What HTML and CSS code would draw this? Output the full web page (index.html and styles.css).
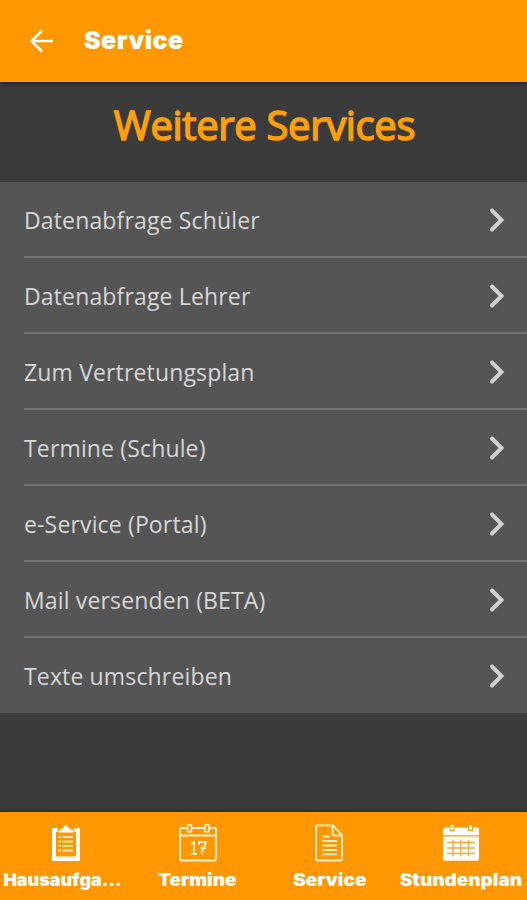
FILE: index.html
```html
<!DOCTYPE html>
<html lang="de">
<head>
<meta charset="utf-8">
<title>Service</title>
<link rel="stylesheet" href="styles.css">
</head>
<body>
<svg class="defs" width="0" height="0"><symbol id="chevron" viewBox="0 0 18 26"><path d="M4 3.500 13.500 13 4 22.500" fill="none" stroke="#d0d0d0" stroke-width="4" stroke-linecap="round"/></symbol></svg>
<header class="bar">
  <svg class="back" viewBox="0 0 26 26"><path d="M24 13H3M13 2.500 2.500 13 13 23.500" fill="none" stroke="#fff" stroke-width="2.500"/></svg>
  <span class="bar-title">Service</span>
</header>
<main>
  <h1>Weitere Services</h1>
  <ul class="list">
    <li><span>Datenabfrage Schüler</span><svg class="chev"><use href="#chevron"/></svg></li>
    <li><span>Datenabfrage Lehrer</span><svg class="chev"><use href="#chevron"/></svg></li>
    <li><span>Zum Vertretungsplan</span><svg class="chev"><use href="#chevron"/></svg></li>
    <li><span>Termine (Schule)</span><svg class="chev"><use href="#chevron"/></svg></li>
    <li><span>e-Service (Portal)</span><svg class="chev"><use href="#chevron"/></svg></li>
    <li><span>Mail versenden (BETA)</span><svg class="chev"><use href="#chevron"/></svg></li>
    <li><span>Texte umschreiben</span><svg class="chev"><use href="#chevron"/></svg></li>
  </ul>
</main>
<nav class="tabs">
  <a class="tab">
    <svg viewBox="0 0 38 38"><path fill="#fff" fill-rule="evenodd" d="M5 4h5.500v4H9v24.500h20V8h-1.500V4H33v33H5z"/><path fill="#fff" d="M11.500 8.500V6.500l5-2.500Q17.500 1 19 1t2.500 3l5 2.500v2z"/><path d="M11.500 13h2.500M11.500 17.500h2.500M11.500 22h2.500M11.500 26.500h2.500M15.500 13H26M15.500 17.500H26M15.500 22H26M15.500 26.500H26" stroke="#ffe6b8" stroke-width="2.200"/></svg>
    <span class="label narrow">Hausaufga...</span>
  </a>
  <a class="tab">
    <svg viewBox="0 0 38 38" fill="none" stroke="#fff0cf" stroke-width="1.800"><path d="M8 4H2.500Q1 4 1 5.500v29Q1 36.500 3 36.500h32q2 0 2-2v-29Q37 4 35.500 4H31M26 4H13M1 11.500h36"/><rect x="8.500" y="1" width="4" height="7" rx="1.500"/><rect x="26" y="1" width="4" height="7" rx="1.500"/><path d="m12 20 3-2v12m-3 0h6M20 21v-3h7q0 2-2.500 5l-2 7M21.500 24H27"/></svg>
    <span class="label">Termine</span>
  </a>
  <a class="tab">
    <svg viewBox="0 0 38 38" fill="none" stroke="#fff0cf" stroke-width="1.800"><path d="M6 2.500Q6 1.300 7.500 1.300H23L32 11v24q0 1.500-1.500 1.500h-23Q6 36.500 6 35zM22.500 1.500V9q0 2.500 2.500 2.500h7M12.500 12.500h7M12.500 17h14.500M12.500 21.500h14.500M12.500 26h14.500M12.500 30.300h14.500"/></svg>
    <span class="label">Service</span>
  </a>
  <a class="tab">
    <svg viewBox="0 0 38 38"><path fill="#fff" d="M1 5q0-1.500 1.500-1.500H7.500V7h5V3.500h13.500V7h5V3.500h4.500Q37 3.500 37 5v6.300H1zM1 12.500h36V35q0 1.800-1.800 1.800H2.800Q1 36.800 1 35z"/><path d="M10 1v5M28.500 1v5" stroke="#fff" stroke-width="3"/><path d="M5 18.500h28M5 24h28M5 29.500h28M11 15.500v17M18.800 15.500v17M26.500 15.500v17" stroke="#e9ad43" stroke-width="1.400"/></svg>
    <span class="label">Stundenplan</span>
  </a>
</nav>
</body>
</html>
```
FILE: styles.css
```css
* { box-sizing: border-box; }
body { margin: 0; height: 900px; display: flex; flex-direction: column; background: #3b3b3b; font-family: "Open Sans", "Noto Sans", sans-serif; overflow: hidden; }
.defs { position: absolute; }
.bar { height: 82px; flex: none; background: #ff9800; display: flex; align-items: center; padding: 0 29px; box-shadow: 0 1px 4px #181818; }
.back { width: 26px; height: 26px; }
.bar-title { margin: -3px 0 0 29px; color: #fff; font: 900 25px/30px Inter, sans-serif; letter-spacing: .45px; }
main { flex: 1; }
h1 { margin: 0; height: 100px; padding: 16px 0 0 2px; text-align: center; color: #ff9f0d; font-weight: 400; font-size: 40px; line-height: 54px; letter-spacing: -.35px; -webkit-text-stroke: 1.500px #ff9f0d; }
.list { margin: 0; padding: 0 0 0 24px; list-style: none; background: #555; }
.list li { height: 76px; display: flex; align-items: center; justify-content: space-between; padding: 2px 21px 0 0; color: #d6d6d6; font-size: 23px; line-height: 32px; letter-spacing: .15px; border-bottom: 2px solid #727272; }
.list li:last-child { height: 75px; border-bottom: 0; padding-top: 0; }
.chev { width: 18px; height: 26px; }
.tabs { height: 88px; flex: none; background: #ff9800; display: grid; grid-template-columns: repeat(4, 1fr); box-shadow: 0 -1px 2px #282828; }
.tab { display: flex; flex-direction: column; align-items: center; padding-top: 12px; min-width: 0; color: #fff; font: 900 17px/22px Inter, sans-serif; white-space: nowrap; }
.tab svg { width: 38px; height: 38px; margin-bottom: 7px; flex: none; }
.label { transform: scaleX(1.115); }
.label.narrow { transform: translateX(-3.500px) scaleX(1.055); }
```
